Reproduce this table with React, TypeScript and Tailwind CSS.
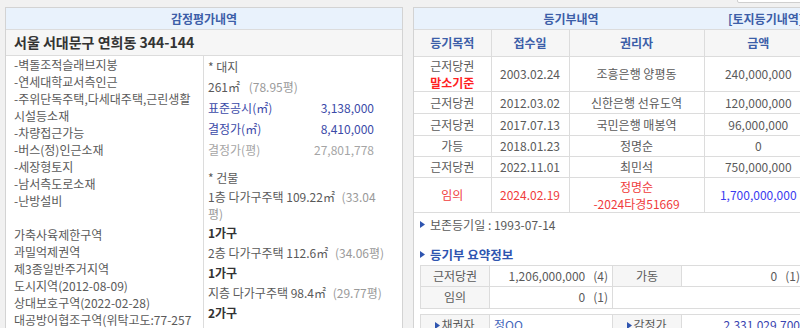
import React from 'react';

const leftLinesA = [
  '-벽돌조적슬래브지붕',
  '-연세대학교서측인근',
  '-주위단독주택,다세대주택,근린생활',
  '시설등소재',
  '-차량접근가능',
  '-버스(정)인근소재',
  '-세장형토지',
  '-남서측도로소재',
  '-난방설비',
];

const leftLinesB = [
  '가축사육제한구역',
  '과밀억제권역',
  '제3종일반주거지역',
  '도시지역(2012-08-09)',
  '상대보호구역(2022-02-28)',
  '대공방어협조구역(위탁고도:77-257',
  'm)',
];

type Reg = { kind: string; sub?: string; date: string; owner: string; ownerSub?: string; amount: string; h: string; red?: boolean };

const regs: Reg[] = [
  { kind: '근저당권', sub: '말소기준', date: '2003.02.24', owner: '조흥은행 양평동', amount: '240,000,000', h: 'h-[34px]' },
  { kind: '근저당권', date: '2012.03.02', owner: '신한은행 선유도역', amount: '120,000,000', h: 'h-[22px]' },
  { kind: '근저당권', date: '2017.07.13', owner: '국민은행 매봉역', amount: '96,000,000', h: 'h-[22px]' },
  { kind: '가등', date: '2018.01.23', owner: '정명순', amount: '0', h: 'h-[21px]' },
  { kind: '근저당권', date: '2022.11.01', owner: '최민석', amount: '750,000,000', h: 'h-[21px]' },
  { kind: '임의', date: '2024.02.19', owner: '정명순', ownerSub: '-2024타경51669', amount: '1,700,000,000', h: 'h-[34px]', red: true },
];

const Bullet = () => (
  <svg width="5" height="7" viewBox="0 0 5 7" className="shrink-0">
    <path d="M0 0 L5 3.5 L0 7 Z" fill="#2f55b0" />
  </svg>
);

export default function App() {
  return (
    <div className="w-[800px] h-[328px] overflow-hidden bg-[#f1f1f1] font-['Noto_Sans_CJK_KR','Noto_Sans',sans-serif] text-[12px] text-[#5a5a5a]">
      <div className="h-[7px] relative">
        <div className="absolute left-[737px] top-[-4px] w-[80px] h-[7px] bg-white border border-[#cfcfcf] rounded-[2px]" />
      </div>
      <div className="flex items-start pl-[5px] gap-[10px]">
        {/* 감정평가내역 */}
        <div className="w-[398px] h-[330px] shrink-0 bg-white border border-[#d3d3d3]">
          <div className="h-[22px] bg-[#e9f2fc] border-b border-[#dcdcdc] flex items-center justify-center text-[#3c5ea8] font-bold leading-none">
            감정평가내역
          </div>
          <div className="h-[26px] bg-[#f6f6f6] border-b border-[#dcdcdc] flex items-center pl-[8px] text-[14px] font-bold text-[#333]">
            서울 서대문구 연희동 344-144
          </div>
          <div className="flex">
            <div className="w-[198px] shrink-0 border-r border-[#dcdcdc] pl-[8px] h-[280px] overflow-hidden">
              {leftLinesA.map((l, i) => (
                <div key={i} className="leading-[17px] whitespace-nowrap">{l}</div>
              ))}
              <div className="mt-[17px]">
                {leftLinesB.map((l, i) => (
                  <div key={i} className="leading-[17px] whitespace-nowrap">{l}</div>
                ))}
              </div>
            </div>
            <div className="flex-1 pl-[4px] pt-[1px]">
              <div className="leading-[20px]">* 대지</div>
              <div className="leading-[20px]">
                261㎡ <span className="ml-[6px] text-[#9a9a9a]">(78.95평)</span>
              </div>
              <div className="w-[166px] flex justify-between leading-[21px] text-[#3b4aa8]">
                <span>표준공시(㎡)</span><span>3,138,000</span>
              </div>
              <div className="w-[166px] flex justify-between leading-[21px] text-[#3b4aa8]">
                <span>결정가(㎡)</span><span>8,410,000</span>
              </div>
              <div className="w-[166px] flex justify-between leading-[21px] text-[#a5a5a5]">
                <span>결정가(평)</span><span>27,801,778</span>
              </div>
              <div className="mt-[8px] leading-[20px]">* 건물</div>
              <div className="leading-[17px] whitespace-nowrap">
                1층 다가구주택 109.22㎡ <span className="ml-[4px] text-[#9a9a9a]">(33.04</span>
              </div>
              <div className="leading-[17px] text-[#9a9a9a]">평)</div>
              <div className="leading-[20px] mt-[1px] font-semibold text-[#333]">1가구</div>
              <div className="leading-[20px] whitespace-nowrap">
                2층 다가구주택 112.6㎡ <span className="ml-[4px] text-[#9a9a9a]">(34.06평)</span>
              </div>
              <div className="leading-[20px] font-semibold text-[#333]">1가구</div>
              <div className="leading-[20px] whitespace-nowrap">
                지층 다가구주택 98.4㎡ <span className="ml-[4px] text-[#9a9a9a]">(29.77평)</span>
              </div>
              <div className="leading-[20px] font-semibold text-[#333]">2가구</div>
            </div>
          </div>
        </div>

        {/* 등기부내역 */}
        <div className="w-[400px] h-[330px] shrink-0 bg-white border border-[#d3d3d3]">
          <div className="h-[22px] bg-[#e9f2fc] border-b border-[#dcdcdc] flex items-center leading-none font-bold text-[#3c5ea8]">
            <div className="flex-1 text-center">등기부내역</div>
            <div className="w-[84px] whitespace-nowrap">[토지등기내역]</div>
          </div>
          <table className="table-fixed border-collapse w-[398px]">
            <colgroup>
              <col className="w-[77px]" />
              <col className="w-[78px]" />
              <col className="w-[135px]" />
              <col className="w-[108px]" />
            </colgroup>
            <thead>
              <tr className="h-[26px] bg-[#f6f6f6] text-[#3c5ea8] font-bold">
                <th className="border-r border-b border-[#dcdcdc] font-bold p-0">등기목적</th>
                <th className="border-r border-b border-[#dcdcdc] font-bold p-0">접수일</th>
                <th className="border-r border-b border-[#dcdcdc] font-bold p-0">권리자</th>
                <th className="border-b border-[#dcdcdc] font-bold p-0">금액</th>
              </tr>
            </thead>
            <tbody>
              {regs.map((r, i) => (
                <tr key={i} className={`${r.h} text-center leading-[17px] ${r.red ? 'text-[#f03c3c]' : ''}`}>
                  <td className="border-r border-b border-[#dcdcdc] p-0">
                    <div>{r.kind}</div>
                    {r.sub && <div className="text-[#ff1f1f] font-bold">{r.sub}</div>}
                  </td>
                  <td className="border-r border-b border-[#dcdcdc] p-0">{r.date}</td>
                  <td className="border-r border-b border-[#dcdcdc] p-0 whitespace-nowrap">
                    <div>{r.owner}</div>
                    {r.ownerSub && <div>{r.ownerSub}</div>}
                  </td>
                  <td className={`border-b border-[#dcdcdc] p-0 ${r.red ? 'text-[#3a3af0]' : ''}`}>{r.amount}</td>
                </tr>
              ))}
            </tbody>
          </table>

          <div className="mt-[3px] pl-[6px] flex items-center gap-[5px] leading-[17px]">
            <Bullet />
            <span>보존등기일 : 1993-07-14</span>
          </div>
          <div className="mt-[13px] pl-[6px] flex items-center gap-[5px] leading-[17px] font-bold text-[#2f55b0] text-[12.5px]">
            <Bullet />
            <span>등기부 요약정보</span>
          </div>

          <div className="mx-[6px] mt-[2px] grid grid-cols-[69px_123px_69px_123px] border-t border-l border-[#dcdcdc]">
            <div className="h-[21px] flex items-center justify-center bg-[#f6f6f6] border-r border-b border-[#dcdcdc]">근저당권</div>
            <div className="h-[21px] flex items-center justify-end pr-[4px] border-r border-b border-[#dcdcdc] whitespace-nowrap">
              1,206,000,000<span className="ml-[8px]">(4)</span>
            </div>
            <div className="h-[21px] flex items-center justify-center bg-[#f6f6f6] border-r border-b border-[#dcdcdc]">가동</div>
            <div className="h-[21px] flex items-center justify-end pr-[4px] border-r border-b border-[#dcdcdc] whitespace-nowrap">
              0<span className="ml-[8px]">(1)</span>
            </div>
            <div className="h-[22px] flex items-center justify-center bg-[#f6f6f6] border-r border-b border-[#dcdcdc]">임의</div>
            <div className="h-[22px] flex items-center justify-end pr-[4px] border-r border-b border-[#dcdcdc] whitespace-nowrap">
              0<span className="ml-[8px]">(1)</span>
            </div>
            <div className="h-[22px] col-span-2 border-r border-b border-[#dcdcdc]" />
          </div>

          <div className="mx-[6px] mt-[5px] grid grid-cols-[69px_123px_69px_123px] border-t border-l border-[#dcdcdc]">
            <div className="h-[22px] flex items-center justify-center gap-[1px] bg-[#f6f6f6] border-r border-b border-[#dcdcdc]">
              <Bullet />채권자
            </div>
            <div className="h-[22px] flex items-center pl-[4px] border-r border-b border-[#dcdcdc] text-[#4466bb]">정OO</div>
            <div className="h-[22px] flex items-center justify-center gap-[1px] bg-[#f6f6f6] border-r border-b border-[#dcdcdc]">
              <Bullet />감정가
            </div>
            <div className="h-[22px] flex items-center justify-end pr-[4px] border-r border-b border-[#dcdcdc] text-[#3a44b0]">2,331,029,700</div>
          </div>
        </div>
      </div>
    </div>
  );
}
